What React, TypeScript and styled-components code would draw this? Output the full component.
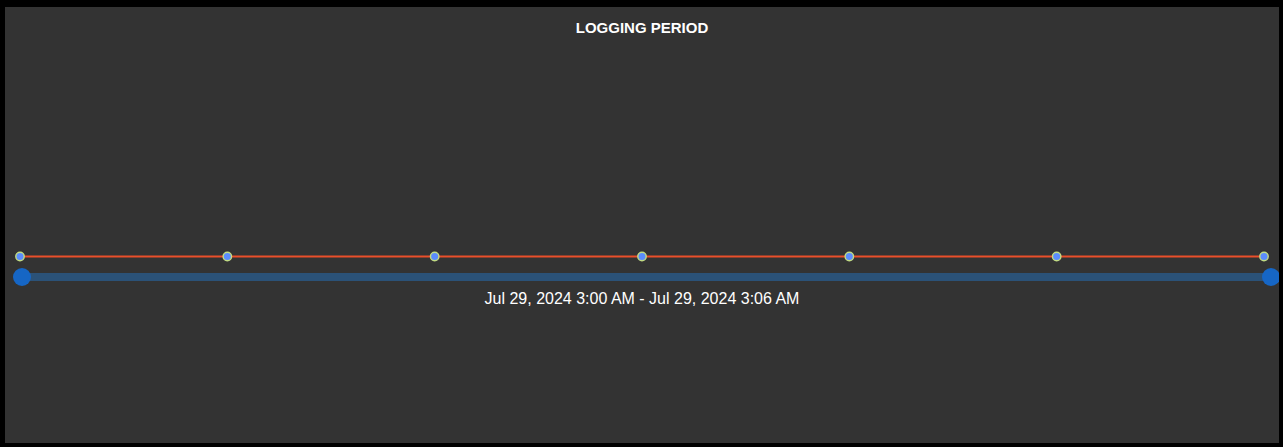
import styled, {createGlobalStyle} from "styled-components";

const GlobalStyle = createGlobalStyle`
    html, body {
        margin: 0;
        padding: 0;
        background: #000;
    }
    body {
        font-family: "Liberation Sans", Arial, sans-serif;
    }
`

const POINTS = 7;
const CHART_WIDTH = 1274;
const LINE_START = 15;
const LINE_END = 1259;

function App() {
    const step = (LINE_END - LINE_START) / (POINTS - 1);
    const xs = Array.from({length: POINTS}, (_, i) => LINE_START + i * step);

    return (
        <>
            <GlobalStyle />
            <Panel>
                <Title>LOGGING PERIOD</Title>
                <Chart viewBox={`0 0 ${CHART_WIDTH} 226`} width={CHART_WIDTH} height={226}>
                    <line x1={LINE_START} y1={219.5} x2={LINE_END} y2={219.5} stroke="#ea4f2a" strokeWidth={2} />
                    {xs.map(x => (
                        <circle key={x} cx={x} cy={219.5} r={4.2} fill="#5b8dfd" stroke="#c2dc84" strokeWidth={1.4} />
                    ))}
                </Chart>
                <Slider>
                    <Track />
                    <Handle $side="left" />
                    <Handle $side="right" />
                </Slider>
                <Range>Jul 29, 2024 3:00 AM - Jul 29, 2024 3:06 AM</Range>
            </Panel>
        </>
    )
}

export default App;

const Panel = styled.div`
    margin: 7px 4px 0 5px;
    height: 436px;
    box-sizing: border-box;
    padding-top: 12px;
    background: #333333;
    display: flex;
    flex-direction: column;
    overflow: hidden;
`

const Title = styled.h2`
    margin: 0;
    font-size: 15px;
    line-height: 18px;
    font-weight: 700;
    color: #fff;
    text-align: center;
`

const Chart = styled.svg`
    display: block;
`

const Slider = styled.div`
    position: relative;
    height: 18px;
    margin: 5px 8px 0 17px;
    display: flex;
    align-items: center;
`

const Track = styled.div`
    flex: 1;
    height: 8px;
    background: #2b5278;
`

const Handle = styled.div<{ $side: "left" | "right" }>`
    position: absolute;
    top: 0;
    ${p => p.$side === "left" ? "left: -9px;" : "right: -9px;"}
    width: 18px;
    height: 18px;
    border-radius: 50%;
    background: #1666c5;
`

const Range = styled.div`
    margin-top: 3px;
    font-size: 16px;
    line-height: 19px;
    color: #fff;
    text-align: center;
`
